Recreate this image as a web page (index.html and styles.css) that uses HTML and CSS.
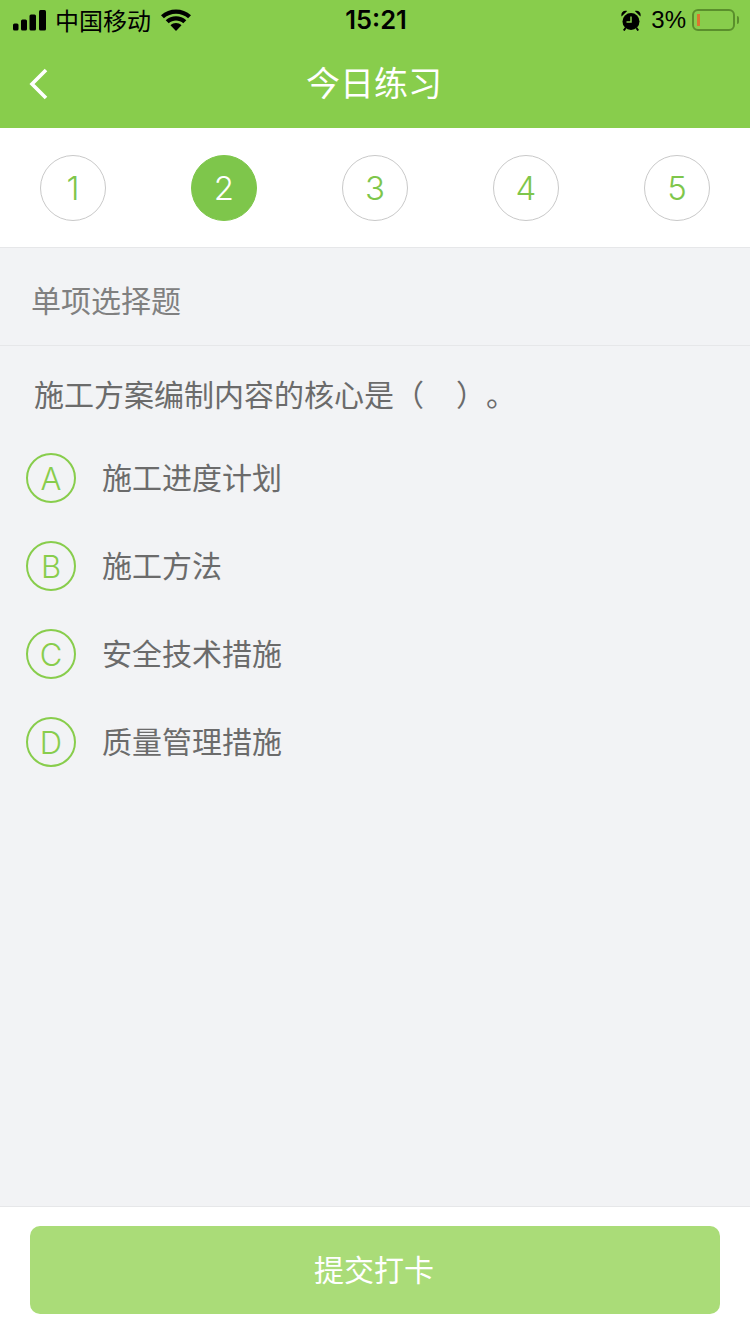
FILE: index.html
```html
<!DOCTYPE html>
<html>
<head>
  <meta charset="utf-8">
  <title>今日练习</title>
  <meta name="viewport" content="width=device-width">
  <link rel="stylesheet" href="styles.css">
</head>
<body>

<div id="app">
  <header class="top">
    <div class="status">
      <div class="status-left">
        <svg class="signal" width="33" height="21" viewBox="0 0 33 21">
          <rect x="0" y="13.500" width="5.500" height="7" rx="1.500"/>
          <rect x="8" y="9.500" width="6" height="11" rx="1.500"/>
          <rect x="16.500" y="4.500" width="6.500" height="16" rx="1.500"/>
          <rect x="26" y="0" width="7" height="20.500" rx="1.500"/>
        </svg>
        <span class="carrier">中国移动</span>
        <svg class="wifi" width="30" height="23" viewBox="0 0 30 23">
          <path d="M15 23L9.500 17.200C12.500 14.400 17.500 14.400 20.500 17.200Z"/>
          <path d="M7.700 15.300L4.700 12.200C10.300 6.800 19.700 6.800 25.300 12.200L22.300 15.300C18.200 11.500 11.800 11.500 7.700 15.300Z"/>
          <path d="M2.900 10.300L0 7.300C8.200 -.4 21.800 -.4 30 7.300L27.100 10.300C20.500 4.100 9.500 4.100 2.900 10.300Z"/>
        </svg>
      </div>
      <span class="clock">15:21</span>
      <div class="status-right">
        <svg class="alarm" width="20" height="21" viewBox="0 0 20 21">
          <circle cx="10" cy="11.500" r="8.500"/>
          <path d="M.6 6.500C-.6 2.800 2.500 -.4 6.200 1ZM19.400 6.500C20.600 2.800 17.500 -.4 13.800 1Z"/>
          <path d="M4.500 18L2.800 20.500M15.500 18L17.200 20.500" stroke="#000" stroke-width="2"/>
          <path d="M10 6.500V12H5.500" fill="none" stroke="#88cd4c" stroke-width="1.500"/>
        </svg>
        <span class="percent">3%</span>
        <div class="battery"><i class="battery-level"></i></div>
        <i class="battery-cap"></i>
      </div>
    </div>
    <div class="nav">
      <svg class="back" width="22" height="34" viewBox="0 0 22 34">
        <path d="M18 3L4 17L18 31" fill="none" stroke="#fff" stroke-width="3.600"/>
      </svg>
      <h1 class="title">今日练习</h1>
    </div>
  </header>

  <div class="steps">
    <div class="step">1</div>
    <div class="step active">2</div>
    <div class="step">3</div>
    <div class="step">4</div>
    <div class="step">5</div>
  </div>

  <main class="content">
    <div class="kind">单项选择题</div>
    <p class="question">施工方案编制内容的核心是（<span class="blank"></span>）。</p>
    <ul class="options">
      <li class="option"><span class="letter">A</span><span class="option-text">施工进度计划</span></li>
      <li class="option"><span class="letter">B</span><span class="option-text">施工方法</span></li>
      <li class="option"><span class="letter">C</span><span class="option-text">安全技术措施</span></li>
      <li class="option"><span class="letter">D</span><span class="option-text">质量管理措施</span></li>
    </ul>
  </main>

  <footer class="bottom">
    <button class="submit" type="button">提交打卡</button>
  </footer>
</div>

</body>
</html>
```

FILE: styles.css
```css
* {
  box-sizing: border-box;
}

html,
body {
  margin: 0;
  padding: 0;
  height: 100%;
}

body {
  font-family: "Liberation Sans", "Noto Sans CJK SC", sans-serif;
  background: #f2f3f5;
}

#app {
  display: flex;
  flex-direction: column;
  height: 1334px;
}

.top {
  background: #88cd4c;
  height: 128px;
}

.status {
  display: flex;
  align-items: center;
  justify-content: space-between;
  height: 40px;
  padding: 0 11px 0 13px;
  color: #000;
}

.status-left,
.status-right {
  display: flex;
  align-items: center;
  width: 260px;
}

.status-right {
  justify-content: flex-end;
}

.signal {
  margin-right: 9px;
}

.carrier {
  margin: 0 10px 2px 0;
  font-size: 24px;
}

.wifi {
  margin-top: -2px;
}

.clock {
  font-family: Inter, "Liberation Sans", sans-serif;
  font-size: 25.500px;
  font-weight: 600;
  line-height: 1;
}

.alarm {
  margin-right: 10px;
}

.percent {
  margin-right: 6px;
  font-size: 24px;
}

.battery {
  width: 43px;
  height: 22px;
  padding: 3px;
  border: 2px solid #5a8f2c;
  border-radius: 6px;
}

.battery-level {
  display: block;
  width: 3px;
  height: 100%;
  background: #d9762f;
}

.battery-cap {
  display: block;
  width: 2px;
  height: 8px;
  margin-left: 2px;
  border-radius: 0 2px 2px 0;
  background: #5a8f2c;
}

.nav {
  display: flex;
  align-items: center;
  justify-content: center;
  height: 88px;
  position: relative;
}

.back {
  position: absolute;
  left: 28px;
  top: 27px;
}

.title {
  margin: 0;
  padding: 0 2px 6px 0;
  font-size: 34px;
  font-weight: normal;
  color: #fff;
}

.steps {
  display: flex;
  justify-content: space-between;
  align-items: center;
  height: 120px;
  padding: 1px 40px 0;
  background: #fff;
  border-bottom: 1px solid #e6e7e9;
}

.step {
  display: flex;
  align-items: center;
  justify-content: center;
  width: 66px;
  height: 66px;
  border: 1px solid #c9c9c9;
  border-radius: 50%;
  font-family: Inter, "Liberation Sans", sans-serif;
  font-size: 33px;
  font-weight: 350;
  color: #7ec64b;
}

.step.active {
  background: #7ec64b;
  border-color: #7ec64b;
  color: #fff;
}

.content {
  flex: 1;
}

.kind {
  display: flex;
  align-items: center;
  height: 98px;
  padding: 4px 0 0 31px;
  border-bottom: 1px solid #e6e7e9;
  font-size: 30px;
  color: #808080;
}

.question {
  margin: 0;
  padding: 30px 0 0 34px;
  height: 88px;
  line-height: 40px;
  font-size: 30px;
  color: #6b6b6b;
  text-spacing-trim: space-all;
}

.blank {
  display: inline-block;
  width: 32px;
}

.options {
  list-style: none;
  margin: 0;
  padding: 0 0 0 26px;
}

.option {
  display: flex;
  align-items: center;
  height: 88px;
  font-size: 30px;
  color: #6b6b6b;
}

.option-text {
  padding-bottom: 5px;
}

.letter {
  display: flex;
  align-items: center;
  justify-content: center;
  width: 50px;
  height: 50px;
  margin-right: 26px;
  border: 2px solid #88cd4c;
  border-radius: 50%;
  font-family: Inter, "Liberation Sans", sans-serif;
  font-size: 31px;
  font-weight: 350;
  color: #88cd4c;
}

.bottom {
  height: 128px;
  padding: 19px 30px 20px;
  background: #fff;
  border-top: 1px solid #e6e7e9;
}

.submit {
  display: block;
  width: 100%;
  height: 88px;
  padding: 0 2px 4px 0;
  border: none;
  border-radius: 10px;
  background: #aadc78;
  color: #fff;
  font-family: inherit;
  font-size: 30px;
}
```
